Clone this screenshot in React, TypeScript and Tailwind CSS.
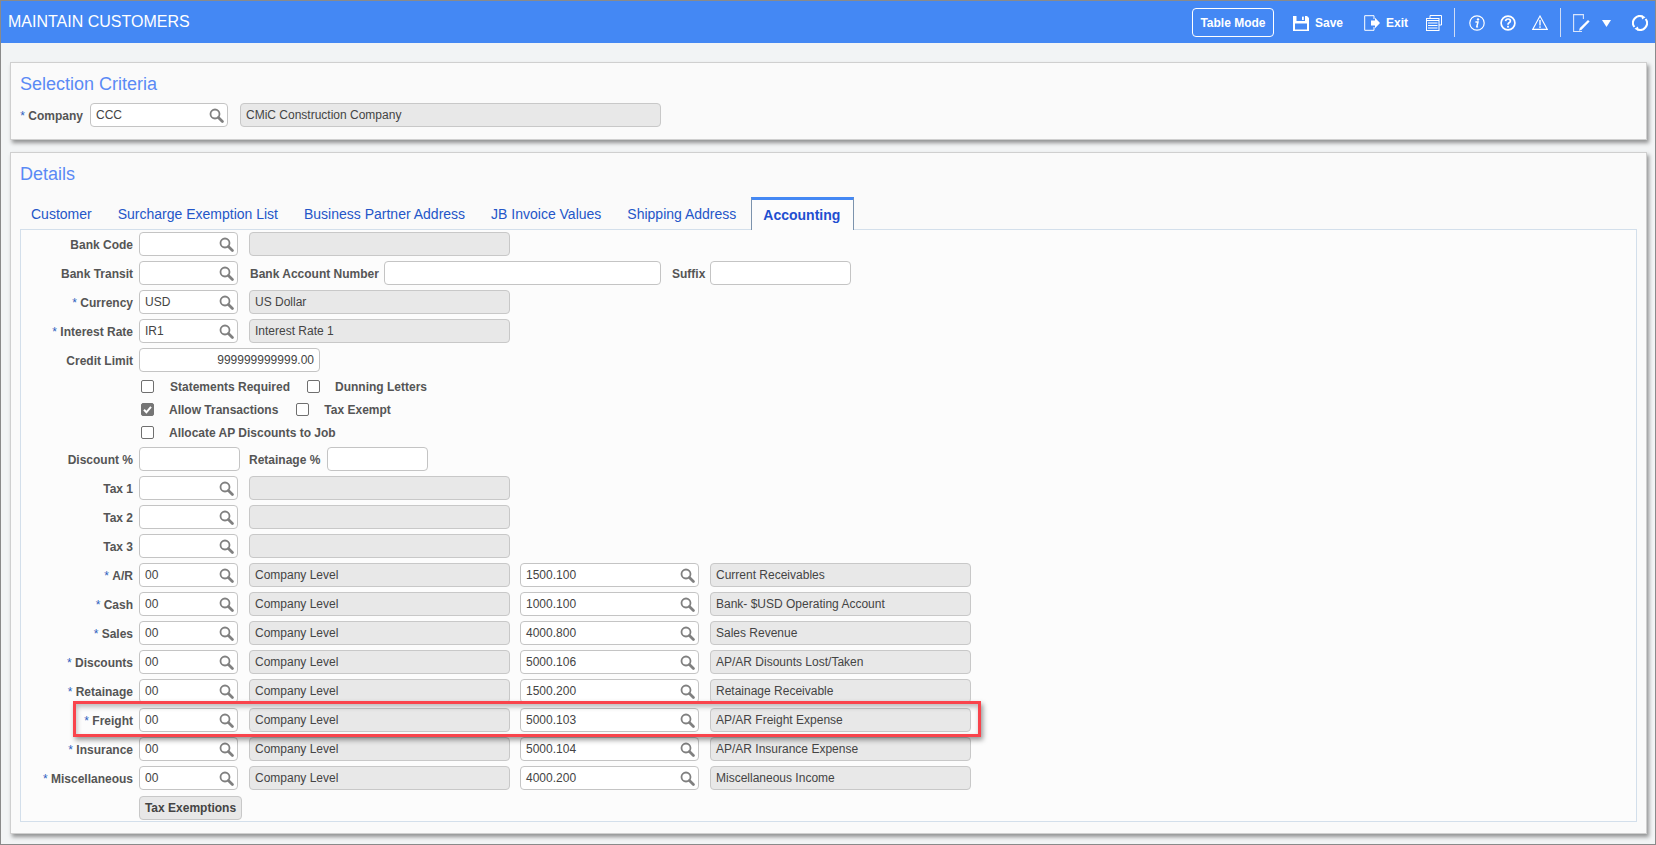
import React from "react";

const Search = () => (
  <svg width="15" height="15" viewBox="0 0 15 15" className="shrink-0">
    <circle cx="6" cy="6" r="4.5" fill="none" stroke="#808080" strokeWidth="1.8" />
    <line x1="9.4" y1="9.4" x2="13.4" y2="13.4" stroke="#808080" strokeWidth="2.8" strokeLinecap="round" />
  </svg>
);

const Label = ({ req, children, w = "w-[112px]" }: { req?: boolean; children: React.ReactNode; w?: string }) => (
  <div className={`${w} shrink-0 text-right text-[12px] font-bold text-[#555] whitespace-nowrap pt-[2px]`}>
    {req && <span className="text-[#2f5fc0] font-normal">* </span>}
    {children}
  </div>
);

const Lookup = ({ value = "", w = "w-[99px]" }: { value?: string; w?: string }) => (
  <div className={`${w} h-[24px] shrink-0 flex items-center justify-between bg-white border border-[#c4c4c4] rounded-[4px] pl-[5px] pr-[3px] text-[12px] text-[#444]`}>
    <span>{value}</span>
    <Search />
  </div>
);

const Plain = ({ value = "", w, right }: { value?: string; w: string; right?: boolean }) => (
  <div className={`${w} h-[24px] shrink-0 flex items-center ${right ? "justify-end" : ""} bg-white border border-[#c4c4c4] rounded-[4px] px-[5px] text-[12px] text-[#444]`}>
    {value}
  </div>
);

const Gray = ({ value = "", w = "w-[261px]" }: { value?: string; w?: string }) => (
  <div className={`${w} h-[24px] shrink-0 flex items-center bg-[#e8e8e8] border border-[#c8c8c8] rounded-[4px] px-[5px] text-[12px] text-[#444] whitespace-nowrap`}>
    {value}
  </div>
);

const Row = ({ children, className = "" }: { children: React.ReactNode; className?: string }) => (
  <div className={`flex items-center h-[24px] mb-[5px] ${className}`}>{children}</div>
);

const Check = ({ checked, ml, label, gap }: { checked?: boolean; ml: string; label: string; gap: string }) => (
  <>
    <div className={`${ml} w-[13px] h-[13px] shrink-0 rounded-[2px] flex items-center justify-center border ${checked ? "bg-[#757575] border-[#757575]" : "bg-white border-[#6f6f6f]"}`}>
      {checked && (
        <svg width="11" height="11" viewBox="0 0 11 11">
          <path d="M2 5.8 L4.4 8.3 L9 2.8" fill="none" stroke="#fff" strokeWidth="2" />
        </svg>
      )}
    </div>
    <span className={`${gap} text-[12px] font-bold text-[#555] whitespace-nowrap`}>{label}</span>
  </>
);

const AcctRow = ({ label, v1, g2, g1 = "Company Level", req = true }: { label: string; v1: string; g1?: string; g2: [string, string]; req?: boolean }) => (
  <Row>
    <Label req={req}>{label}</Label>
    <div className="w-[6px] shrink-0" />
    <Lookup value={v1} />
    <div className="w-[11px] shrink-0" />
    <Gray value={g1} />
    <div className="w-[10px] shrink-0" />
    <Lookup value={g2[0]} w="w-[179px]" />
    <div className="w-[11px] shrink-0" />
    <Gray value={g2[1]} w="w-[261px]" />
  </Row>
);

const SimpleRow = ({ label, value, gray, req }: { label: string; value?: string; gray?: string; req?: boolean }) => (
  <Row>
    <Label req={req}>{label}</Label>
    <div className="w-[6px] shrink-0" />
    <Lookup value={value} />
    <div className="w-[11px] shrink-0" />
    <Gray value={gray} />
  </Row>
);

const Sep = () => <div className="w-px h-[29px] bg-[#cfdcf5]" />;

export default function App() {
  const tabs: [string, string][] = [
    ["Customer", "Customer"],
    ["Surcharge", "Surcharge Exemption List"],
    ["Business", "Business Partner Address"],
    ["JB", "JB Invoice Values"],
    ["Shipping", "Shipping Address"],
  ];
  return (
    <div className="w-[1656px] h-[845px] overflow-hidden bg-[#f2f4f5] border border-[#8a8a8a] font-['Liberation_Sans',Arial,sans-serif] text-[#444]">
      <header className="h-[42px] bg-[#4488f4] flex items-center text-white pl-[7px]">
        <div className="text-[16px]">MAINTAIN CUSTOMERS</div>
        <div className="ml-auto flex items-center pt-px">
          <button className="w-[82px] h-[29px] border border-white rounded-[4px] text-[12px] font-bold">Table Mode</button>
          <svg width="16" height="16" viewBox="0 0 16 16" className="ml-[19px]">
            <path d="M0 1 H14 L16 3 V16 H0 Z" fill="#fff" />
            <rect x="3.5" y="1" width="8.5" height="5" fill="#4488f4" />
            <rect x="9" y="1.6" width="1.8" height="3.4" fill="#fff" />
            <rect x="2" y="8.5" width="12" height="6" fill="#4488f4" />
          </svg>
          <span className="ml-[6px] text-[12px] font-bold">Save</span>
          <svg width="16" height="16" viewBox="0 0 16 16" className="ml-[21px]">
            <path d="M10 4 V0.7 H0.7 V15.3 H10 V12" fill="none" stroke="#fff" strokeWidth="1" />
            <path d="M7 5.5 H11 V2.8 L16 8 L11 13.2 V10.5 H7 Z" fill="#fff" />
          </svg>
          <span className="ml-[6px] text-[12px] font-bold">Exit</span>
          <svg width="16" height="16" viewBox="0 0 16 16" className="ml-[18px]">
            <path d="M4 3 V0.5 H15.5 V10 H13" fill="none" stroke="#fff" strokeWidth="1" />
            <rect x="0.5" y="3.5" width="12.5" height="12" fill="#4488f4" stroke="#fff" />
            <path d="M0.5 5.5 H13 M2 8 H11.5 M2 10.5 H11.5 M2 13 H11.5" stroke="#fff" strokeWidth="1.2" />
          </svg>
          <div className="ml-[12px]"><Sep /></div>
          <svg width="16" height="16" viewBox="0 0 16 16" className="ml-[14px]">
            <circle cx="8" cy="8" r="7.2" fill="none" stroke="#fff" strokeWidth="1.2" />
            <circle cx="9" cy="4.4" r="1.2" fill="#fff" />
            <path d="M6.4 7 H9 L7.8 11.6 Q7.6 12.3 9 11.6" fill="none" stroke="#fff" strokeWidth="1.5" />
          </svg>
          <svg width="16" height="16" viewBox="0 0 16 16" className="ml-[15px]">
            <circle cx="8" cy="8" r="6.9" fill="none" stroke="#fff" strokeWidth="1.7" />
            <path d="M5.6 6.2 Q5.8 4 8 4 Q10.4 4 10.4 6 Q10.4 7.2 8.8 8 Q8 8.5 8 9.8" fill="none" stroke="#fff" strokeWidth="1.7" />
            <rect x="7.1" y="10.8" width="1.8" height="1.8" fill="#fff" />
          </svg>
          <svg width="16" height="15" viewBox="0 0 16 15" className="ml-[16px]">
            <path d="M8 1 L15.3 14.4 H0.7 Z" fill="none" stroke="#fff" strokeWidth="1.1" />
            <rect x="7.3" y="5" width="1.4" height="5.5" fill="#fff" />
            <rect x="7.3" y="11.3" width="1.4" height="1.6" fill="#fff" />
          </svg>
          <div className="ml-[12px]"><Sep /></div>
          <svg width="17" height="18" viewBox="0 0 17 18" className="ml-[12px]">
            <path d="M9 17.5 H0.6 V0.6 H10.4 V5" fill="none" stroke="#dbe6fb" strokeWidth="1.1" />
            <path d="M15 6 L16.6 7.6 L8.6 15.8 L6 16.8 L6.8 14 Z" fill="#fff" />
          </svg>
          <svg width="9" height="7" viewBox="0 0 9 7" className="ml-[12px] mt-[2px]">
            <path d="M0 0 H9 L4.5 7 Z" fill="#fff" />
          </svg>
          <svg width="16" height="16" viewBox="0 0 16 16" className="ml-[21px] mr-[7px]">
            <path d="M2.4 12 A6.8 6.8 0 0 1 11 1.9" fill="none" stroke="#fff" strokeWidth="2" />
            <path d="M13.6 4 A6.8 6.8 0 0 1 5 14.1" fill="none" stroke="#fff" strokeWidth="2" />
            <path d="M9.5 0 L13.5 2.2 L10 4.5 Z M6.5 16 L2.5 13.8 L6 11.5 Z" fill="#fff" />
          </svg>
        </div>
      </header>

      <section className="ml-[9px] mr-[8px] mt-[19px] h-[78px] bg-[#fafafa] border border-[#cfcfcf] shadow-[2px_3px_4px_rgba(0,0,0,0.4)] pl-[9px] pt-[9px]">
        <h2 className="text-[18px] leading-[24px] text-[#5a8af5]">Selection Criteria</h2>
        <div className="flex items-center h-[24px] mt-[7px]">
          <Label req w="w-[63px]">Company</Label>
          <div className="w-[7px]" />
          <Lookup value="CCC" w="w-[138px]" />
          <div className="w-[12px]" />
          <Gray value="CMiC Construction Company" w="w-[421px]" />
        </div>
      </section>

      <section className="ml-[9px] mr-[8px] mt-[12px] h-[682px] bg-[#fafafa] border border-[#cfcfcf] shadow-[2px_3px_4px_rgba(0,0,0,0.4)] pl-[9px] pr-[9px] pt-[9px]">
        <h2 className="text-[18px] leading-[24px] text-[#5a8af5]">Details</h2>
        <div className="flex items-end h-[32px] mt-[11px]">
          {tabs.map(([k, t]) => (
            <div key={k} className="px-[13px] pt-[2px] h-[31px] flex items-center text-[14px] text-[#2456c8] whitespace-nowrap first:pl-[11px]">{t}</div>
          ))}
          <div className="relative z-10 top-px ml-[2px] h-[33px] pl-[11px] pr-[13px] flex items-center text-[14px] font-bold text-[#1f4fd0] bg-[#fcfcfc] border-t-[3px] border-t-[#4488f4] border-x border-x-[#7c93ad]">Accounting</div>
        </div>
        <div className="relative h-[593px] border border-[#d3dfeb] pt-[2px] bg-[#fcfcfc]">
          <SimpleRow label="Bank Code" />
          <Row>
            <Label>Bank Transit</Label>
            <div className="w-[6px] shrink-0" />
            <Lookup />
            <span className="ml-[12px] w-[134px] pt-[2px] text-[12px] font-bold text-[#555] whitespace-nowrap">Bank Account Number</span>
            <Plain w="w-[277px]" />
            <span className="ml-[11px] w-[38px] pt-[2px] text-[12px] font-bold text-[#555]">Suffix</span>
            <Plain w="w-[141px]" />
          </Row>
          <SimpleRow label="Currency" req value="USD" gray="US Dollar" />
          <SimpleRow label="Interest Rate" req value="IR1" gray="Interest Rate 1" />
          <Row className="!mb-[3px]">
            <Label>Credit Limit</Label>
            <div className="w-[6px] shrink-0" />
            <Plain w="w-[181px]" right value="999999999999.00" />
          </Row>
          <div className="flex items-center h-[23px]">
            <Check ml="ml-[120px]" label="Statements Required" gap="ml-[16px]" />
            <Check ml="ml-[17px]" label="Dunning Letters" gap="ml-[15px]" />
          </div>
          <div className="flex items-center h-[23px]">
            <Check ml="ml-[120px]" checked label="Allow Transactions" gap="ml-[15px]" />
            <Check ml="ml-[18px]" label="Tax Exempt" gap="ml-[15px]" />
          </div>
          <div className="flex items-center h-[23px] mb-[3px]">
            <Check ml="ml-[120px]" label="Allocate AP Discounts to Job" gap="ml-[15px]" />
          </div>
          <Row>
            <Label>Discount %</Label>
            <div className="w-[6px] shrink-0" />
            <Plain w="w-[101px]" />
            <span className="ml-[9px] w-[72px] pt-[2px] text-[12px] font-bold text-[#555] whitespace-nowrap">Retainage %</span>
            <div className="w-[6px]" />
            <Plain w="w-[101px]" />
          </Row>
          <SimpleRow label="Tax 1" />
          <SimpleRow label="Tax 2" />
          <SimpleRow label="Tax 3" />
          <AcctRow label="A/R" v1="00" g2={["1500.100", "Current Receivables"]} />
          <AcctRow label="Cash" v1="00" g2={["1000.100", "Bank- $USD Operating Account"]} />
          <AcctRow label="Sales" v1="00" g2={["4000.800", "Sales Revenue"]} />
          <AcctRow label="Discounts" v1="00" g2={["5000.106", "AP/AR Disounts Lost/Taken"]} />
          <AcctRow label="Retainage" v1="00" g2={["1500.200", "Retainage Receivable"]} />
          <AcctRow label="Freight" v1="00" g2={["5000.103", "AP/AR Freight Expense"]} />
          <AcctRow label="Insurance" v1="00" g2={["5000.104", "AP/AR Insurance Expense"]} />
          <AcctRow label="Miscellaneous" v1="00" g2={["4000.200", "Miscellaneous Income"]} />
          <button className="ml-[118px] w-[103px] h-[24px] bg-[#e8e8e8] border border-[#c8c8c8] rounded-[4px] text-[12px] font-bold text-[#444]">Tax Exemptions</button>
          <div className="absolute left-[52px] top-[471px] w-[908px] h-[36px] border-[3px] border-[#f9444c] shadow-[2px_3px_5px_rgba(0,0,0,0.4),inset_1px_3px_5px_rgba(0,0,0,0.25)] pointer-events-none" />
        </div>
      </section>
    </div>
  );
}
